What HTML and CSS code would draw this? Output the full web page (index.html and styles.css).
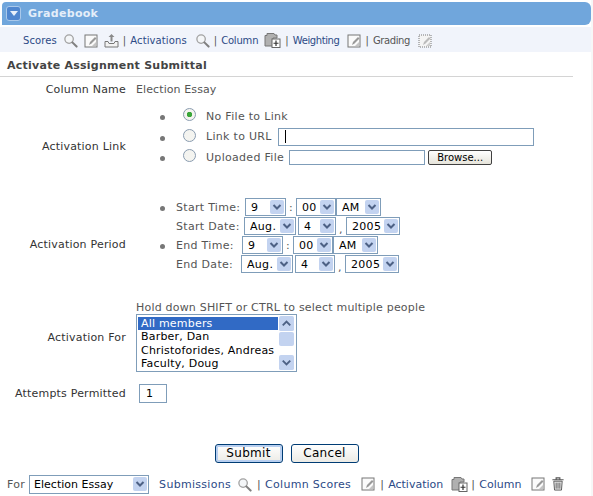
FILE: index.html
```html
<!DOCTYPE html>
<html lang="en">
<head>
    <meta charset="UTF-8">
    <title>Gradebook - Activate Assignment Submittal</title>
    <link rel="stylesheet" href="styles.css">
</head>
<body>
    <svg class="sprites" width="0" height="0">
        <symbol id="i-search" viewBox="0 0 16 16">
            <circle cx="6.500" cy="6.500" r="4.500" fill="#f4f6f8" stroke="#a2a2a2" stroke-width="1.400"/>
            <path d="M10 10l4.500 4.500" stroke="#808080" stroke-width="2.200" stroke-linecap="round"/>
        </symbol>
        <symbol id="i-edit" viewBox="0 0 14 14">
            <rect x="1" y="1" width="12" height="12" fill="#fafafa" stroke="#777" stroke-width="1"/>
            <path d="M5 11l1-3 5-5 1.500 1.500-5 5z" fill="#999"/>
            <path d="M8 12l4-4v4z" fill="#c4c4c4"/>
        </symbol>
        <symbol id="i-edit-off" viewBox="0 0 14 14">
            <rect x="1" y="1" width="12" height="12" fill="#f4f4f4" stroke="#777" stroke-width="1" stroke-dasharray="1 1"/>
            <path d="M5 11l1-3 5-5 1.500 1.500-5 5z" fill="#bbb"/>
            <path d="M8 12l4-4v4z" fill="#ccc"/>
        </symbol>
        <symbol id="i-upload" viewBox="0 0 15 15">
            <path d="M1 8.500h3l1 2h5l1-2h3v5.500h-13z" fill="#f2f2f2" stroke="#777"/>
            <path d="M7.500 1l3 3h-2v4.500h-2v-4.500h-2z" fill="#8a8a8a"/>
        </symbol>
        <symbol id="i-add" viewBox="0 0 17 17">
            <path d="M1 3.500h2v-2h7l1 1.500h2v3h-4v8h-8z" fill="#b0b0b0" stroke="#777"/>
            <rect x="8" y="7" width="8" height="8.500" fill="#fff" stroke="#666"/>
            <path d="M12 8.500v5.500M9.500 11.250h5" stroke="#333" stroke-width="1.200"/>
        </symbol>
        <symbol id="i-trash" viewBox="0 0 14 15">
            <path d="M1 3h12M5 3v-2h4v2" fill="none" stroke="#555" stroke-width="1.200"/>
            <path d="M2.500 4.500h9l-.8 9.500h-7.400z" fill="#eee" stroke="#555"/>
            <path d="M5 6v6.500M7 6v6.500M9 6v6.500" stroke="#555"/>
        </symbol>
        <symbol id="i-down" viewBox="0 0 16 16">
            <rect width="16" height="16" rx="2" fill="#c3d3f0"/>
            <path d="M4 6l4 4 4-4" fill="none" stroke="#4d6185" stroke-width="2"/>
        </symbol>
        <symbol id="i-up" viewBox="0 0 16 16">
            <rect width="16" height="16" rx="2" fill="#c3d3f0"/>
            <path d="M4 10l4-4 4 4" fill="none" stroke="#4d6185" stroke-width="2"/>
        </symbol>
    </svg>

    <div class="page">
        <div class="titlebar">
            <span class="collapse"><svg width="10" height="6" viewBox="0 0 10 6"><path d="M1 0h8l-4 5z" fill="#e8f0fa"/></svg></span>
            <span class="titlebar-text">Gradebook</span>
        </div>

        <div class="toolbar">
            <a href="#">Scores</a>
            <svg class="ic ic-15"><use href="#i-search"/></svg>
            <svg class="ic ic-14"><use href="#i-edit"/></svg>
            <svg class="ic ic-15"><use href="#i-upload"/></svg>
            <span class="sep">|</span>
            <a href="#">Activations</a>
            <svg class="ic ic-15 wide"><use href="#i-search"/></svg>
            <span class="sep">|</span>
            <a class="tight" href="#">Column</a>
            <svg class="ic ic-17"><use href="#i-add"/></svg>
            <span class="sep">|</span>
            <a class="tighter" href="#">Weighting</a>
            <svg class="ic ic-14 wide"><use href="#i-edit"/></svg>
            <span class="sep">|</span>
            <span class="muted tighter">Grading</span>
            <svg class="ic ic-14 wide"><use href="#i-edit-off"/></svg>
        </div>

        <h2 class="heading">Activate Assignment Submittal</h2>

        <form class="form">
            <div class="row row-name">
                <div class="label">Column Name</div>
                <div class="value">Election Essay</div>
            </div>

            <div class="row row-link">
                <div class="label">Activation Link</div>
                <ul class="bullets link-list">
                    <li><input type="radio" name="link" checked><span>No File to Link</span></li>
                    <li><input type="radio" name="link"><span>Link to URL</span><input class="text url" type="text"></li>
                    <li><input type="radio" name="link"><span>Uploaded File</span><input class="text file" type="text"><button class="browse" type="button">Browse...</button></li>
                </ul>
            </div>

            <div class="row row-period">
                <div class="label">Activation Period</div>
                <ul class="bullets period-list">
                    <li>
                        <div class="dt dt-st">
                            <span class="dt-label w-start">Start Time:</span>
                            <select class="w41"><option>9</option></select><span class="colon">:</span>
                            <select class="w40"><option>00</option></select>
                            <select class="w45"><option>AM</option></select>
                        </div>
                        <div class="dt dt-sd">
                            <span class="dt-label w-start-d">Start Date:</span>
                            <select class="w52"><option>Aug.</option></select>
                            <select class="w38"><option>4</option></select><span class="comma">,</span>
                            <select class="w54"><option>2005</option></select>
                        </div>
                    </li>
                    <li>
                        <div class="dt dt-et">
                            <span class="dt-label w-end">End Time:</span>
                            <select class="w41"><option>9</option></select><span class="colon">:</span>
                            <select class="w40"><option>00</option></select>
                            <select class="w45"><option>AM</option></select>
                        </div>
                        <div class="dt dt-ed">
                            <span class="dt-label w-end-d">End Date:</span>
                            <select class="w52"><option>Aug.</option></select>
                            <select class="w40"><option>4</option></select><span class="comma">,</span>
                            <select class="w54"><option>2005</option></select>
                        </div>
                    </li>
                </ul>
            </div>

            <div class="row row-for">
                <div class="label">Activation For</div>
                <div class="value">
                    <div class="hint">Hold down SHIFT or CTRL to select multiple people</div>
                    <div class="listbox">
                        <ul class="listbox-items">
                            <li class="selected">All members</li>
                            <li>Barber, Dan</li>
                            <li>Christoforides, Andreas</li>
                            <li>Faculty, Doug</li>
                        </ul>
                        <div class="scroll">
                            <svg class="scroll-btn"><use href="#i-up"/></svg>
                            <span class="thumb"></span>
                            <svg class="scroll-btn"><use href="#i-down"/></svg>
                        </div>
                    </div>
                </div>
            </div>

            <div class="row row-attempts">
                <div class="label">Attempts Permitted</div>
                <input class="text attempts" type="text" value="1">
            </div>

            <div class="actions">
                <button class="btn btn-default" type="button">Submit</button>
                <button class="btn" type="button">Cancel</button>
            </div>
        </form>

        <div class="footer">
            <span class="muted">For</span>
            <select class="w120"><option>Election Essay</option></select>
            <a class="sub" href="#">Submissions</a>
            <svg class="ic ic-15"><use href="#i-search"/></svg>
            <span class="sep">|</span>
            <a href="#">Column Scores</a>
            <svg class="ic ic-14 wider"><use href="#i-edit"/></svg>
            <span class="sep">|</span>
            <a class="tight" href="#">Activation</a>
            <svg class="ic ic-17 wide"><use href="#i-add"/></svg>
            <span class="sep sep-near">|</span>
            <a class="tight" href="#">Column</a>
            <svg class="ic ic-14 wider"><use href="#i-edit"/></svg>
            <svg class="ic ic-14"><use href="#i-trash"/></svg>
        </div>
    </div>
</body>
</html>
```

FILE: styles.css
```css
html, body {
    margin: 0;
    padding: 0;
    background-color: #f7f7f7;
}
body {
    font-family: "DejaVu Sans", sans-serif;
    font-size: 11px;
    color: #555;
    overflow: hidden;
}
.sprites {
    position: absolute;
}
.page {
    width: 591px;
    height: 496px;
    background-color: #fff;
    overflow: hidden;
}
a {
    color: #2c4a86;
    text-decoration: none;
}
.muted {
    color: #555;
}

/* title bar */
.titlebar {
    display: flex;
    align-items: center;
    height: 23px;
    margin: 2px 0 0 2px;
    padding-left: 4px;
    background-color: #70a6dc;
    border-radius: 4px 6px 6px 0;
}
.collapse {
    display: flex;
    align-items: center;
    justify-content: center;
    width: 13px;
    height: 13px;
    background-color: #4f86cf;
    border: 1px solid #a9c8ea;
    border-radius: 3px;
}
.titlebar-text {
    margin-left: 7px;
    font-size: 11px;
    font-weight: bold;
    letter-spacing: 0.3px;
    color: #e4eef9;
}

/* toolbars */
.toolbar {
    box-sizing: border-box;
    display: flex;
    align-items: center;
    height: 25px;
    margin-top: 2px;
    padding: 2px 0 0 23px;
    background-color: #f1f4fb;
    font-size: 10px;
    letter-spacing: 0.1px;
}
.toolbar .tight {
    letter-spacing: -0.2px;
}
.toolbar .tighter {
    letter-spacing: -0.4px;
}
.ic {
    flex: none;
    margin-left: 6px;
}
.ic.wide {
    margin-left: 8px;
}
.ic.wider {
    margin-left: 10px;
}
.ic-14 {
    width: 14px;
    height: 14px;
}
.ic-15 {
    width: 15px;
    height: 15px;
}
.ic-17 {
    width: 17px;
    height: 17px;
}
.sep {
    margin: 0 4px;
    color: #555;
}
.heading {
    margin: 6px 18px 0 0;
    padding: 0 0 3px 7px;
    height: 15px;
    line-height: 15px;
    font-size: 11px;
    font-weight: bold;
    letter-spacing: 0.25px;
    color: #444;
    border-bottom: 1px solid #d4d4d4;
}

/* form rows */
.row {
    display: flex;
    align-items: center;
}
.label {
    flex: none;
    width: 126px;
    margin-right: 10px;
    text-align: right;
    letter-spacing: 0.2px;
    color: #333;
}
.row-name {
    margin-top: 5px;
    height: 15px;
}
.value {
    letter-spacing: 0.1px;
}
.bullets {
    margin: 0;
    padding: 0;
    list-style: none;
}
.bullets li {
    position: relative;
}
.bullets li::before {
    content: "";
    position: absolute;
    left: 24px;
    width: 5px;
    height: 5px;
    border-radius: 50%;
    background-color: #777;
}

/* activation link */
.row-link {
    margin-top: 9px;
}
.row-link .label {
    margin-top: 20px;
}
.link-list li {
    display: flex;
    align-items: center;
    height: 20.500px;
    padding-left: 47px;
    letter-spacing: 0.3px;
}
.link-list li::before {
    top: 9px;
}
.link-list input[type="radio"] {
    appearance: none;
    box-sizing: border-box;
    width: 13px;
    height: 13px;
    margin: 0 10px 3px 0;
    border: 1px solid #8a9cb0;
    border-radius: 50%;
    background-color: #f4f4f0;
}
.link-list input[type="radio"]:checked {
    background: radial-gradient(circle, #3aa63a 0 2.500px, #f4f4f0 3px);
}
.text {
    box-sizing: border-box;
    padding: 0 4px;
    border: 1px solid #7f9db9;
    background-color: #fff;
    font-family: "DejaVu Sans", sans-serif;
    font-size: 11px;
    color: #000;
}
.url {
    width: 256px;
    height: 18px;
    margin-left: 6px;
    background: #fff linear-gradient(#000, #000) no-repeat 6px center / 1px 13px;
}
.file {
    width: 136px;
    height: 15px;
    margin-left: 5px;
}
.browse {
    box-sizing: border-box;
    width: 64px;
    height: 15px;
    margin-left: 3px;
    padding: 0;
    border: 1px solid #404040;
    border-radius: 2px;
    background: linear-gradient(#fff, #e6e4da);
    font-family: "DejaVu Sans", sans-serif;
    font-size: 10px;
    color: #000;
}

/* activation period */
.row-period {
    margin-top: 30px;
}
.row-period .label {
    margin-top: 18px;
}
.period-list li::before {
    top: 8px;
}
.dt {
    display: flex;
    align-items: center;
    height: 19px;
    padding-left: 40px;
    letter-spacing: 0.3px;
}
.dt-label {
    flex: none;
}
.w-start {
    width: 69px;
}
.w-start-d {
    width: 68px;
}
.w-end {
    width: 66px;
}
.w-end-d {
    width: 65px;
}
.colon {
    width: 10px;
    text-align: center;
}
.comma {
    width: 10px;
    text-align: center;
    align-self: flex-end;
}
select {
    appearance: none;
    box-sizing: border-box;
    height: 18px;
    padding: 0 0 0 5px;
    border: 1px solid #7f9db9;
    border-radius: 0;
    background: #fff url("data:image/svg+xml,%3Csvg xmlns='http://www.w3.org/2000/svg' width='14' height='14'%3E%3Crect width='14' height='14' rx='2' fill='%23c3d3f0'/%3E%3Cpath d='M3.500 5l3.500 3.500 3.500-3.500' fill='none' stroke='%234d6185' stroke-width='2'/%3E%3C/svg%3E") no-repeat right 1px center;
    font-family: "DejaVu Sans", sans-serif;
    font-size: 11px;
    letter-spacing: 0.3px;
    color: #000;
}
.w38 { width: 38px; }
.w40 { width: 40px; }
.w41 { width: 41px; }
.w45 { width: 45px; }
.w52 { width: 52px; margin-right: 2px; }
.w54 { width: 54px; }
.w120 { width: 120px; height: 19px; padding-left: 4px; letter-spacing: 0; }

/* activation for */
.row-for {
    margin-top: 28px;
}
.row-for .label {
    margin-top: 1px;
}
.hint {
    height: 12px;
    line-height: 12px;
    letter-spacing: 0.2px;
}
.listbox {
    box-sizing: border-box;
    display: flex;
    width: 161px;
    height: 58px;
    padding: 1px;
    border: 1px solid #7f9db9;
    background-color: #fff;
}
.listbox-items {
    flex: 1;
    margin: 0;
    padding: 1px 0 0;
    list-style: none;
    letter-spacing: 0.2px;
    color: #000;
}
.listbox-items li {
    height: 13.500px;
    line-height: 13.500px;
    padding-left: 3px;
    white-space: nowrap;
}
.listbox-items .selected {
    background-color: #316ac5;
    color: #fff;
}
.scroll {
    flex: none;
    display: flex;
    flex-direction: column;
    align-items: center;
    justify-content: space-between;
    width: 17px;
}
.scroll-btn {
    width: 15px;
    height: 15px;
}
.thumb {
    width: 15px;
    height: 14px;
    background-color: #c3d3f0;
    border-radius: 2px;
    margin-bottom: 8px;
}

/* attempts and buttons */
.row-attempts {
    margin-top: 12px;
}
.attempts {
    width: 28px;
    height: 19px;
    margin-left: 3px;
    padding-left: 6px;
}
.actions {
    display: flex;
    justify-content: center;
    gap: 8px;
    width: 573px;
    margin-top: 41px;
}
.btn {
    box-sizing: border-box;
    width: 68px;
    height: 19px;
    padding: 0;
    border: 1px solid #003c74;
    border-radius: 3px;
    background: linear-gradient(#fff, #ecebe5);
    font-family: "DejaVu Sans", sans-serif;
    font-size: 12px;
    letter-spacing: 0.3px;
    color: #000;
}
.btn-default {
    box-shadow: inset 0 0 0 2px #b8cff0;
}

/* footer links */
.footer {
    display: flex;
    align-items: center;
    height: 19px;
    margin-top: 12px;
    padding-left: 7px;
    letter-spacing: 0.3px;
}
.footer select {
    margin-left: 4px;
}
.footer .sub {
    margin-left: 10px;
}
.footer .sep {
    margin: 0 4px 0 5px;
}
.footer .sep-near {
    margin-left: 3px;
}
.footer .tight {
    letter-spacing: 0;
}
```
